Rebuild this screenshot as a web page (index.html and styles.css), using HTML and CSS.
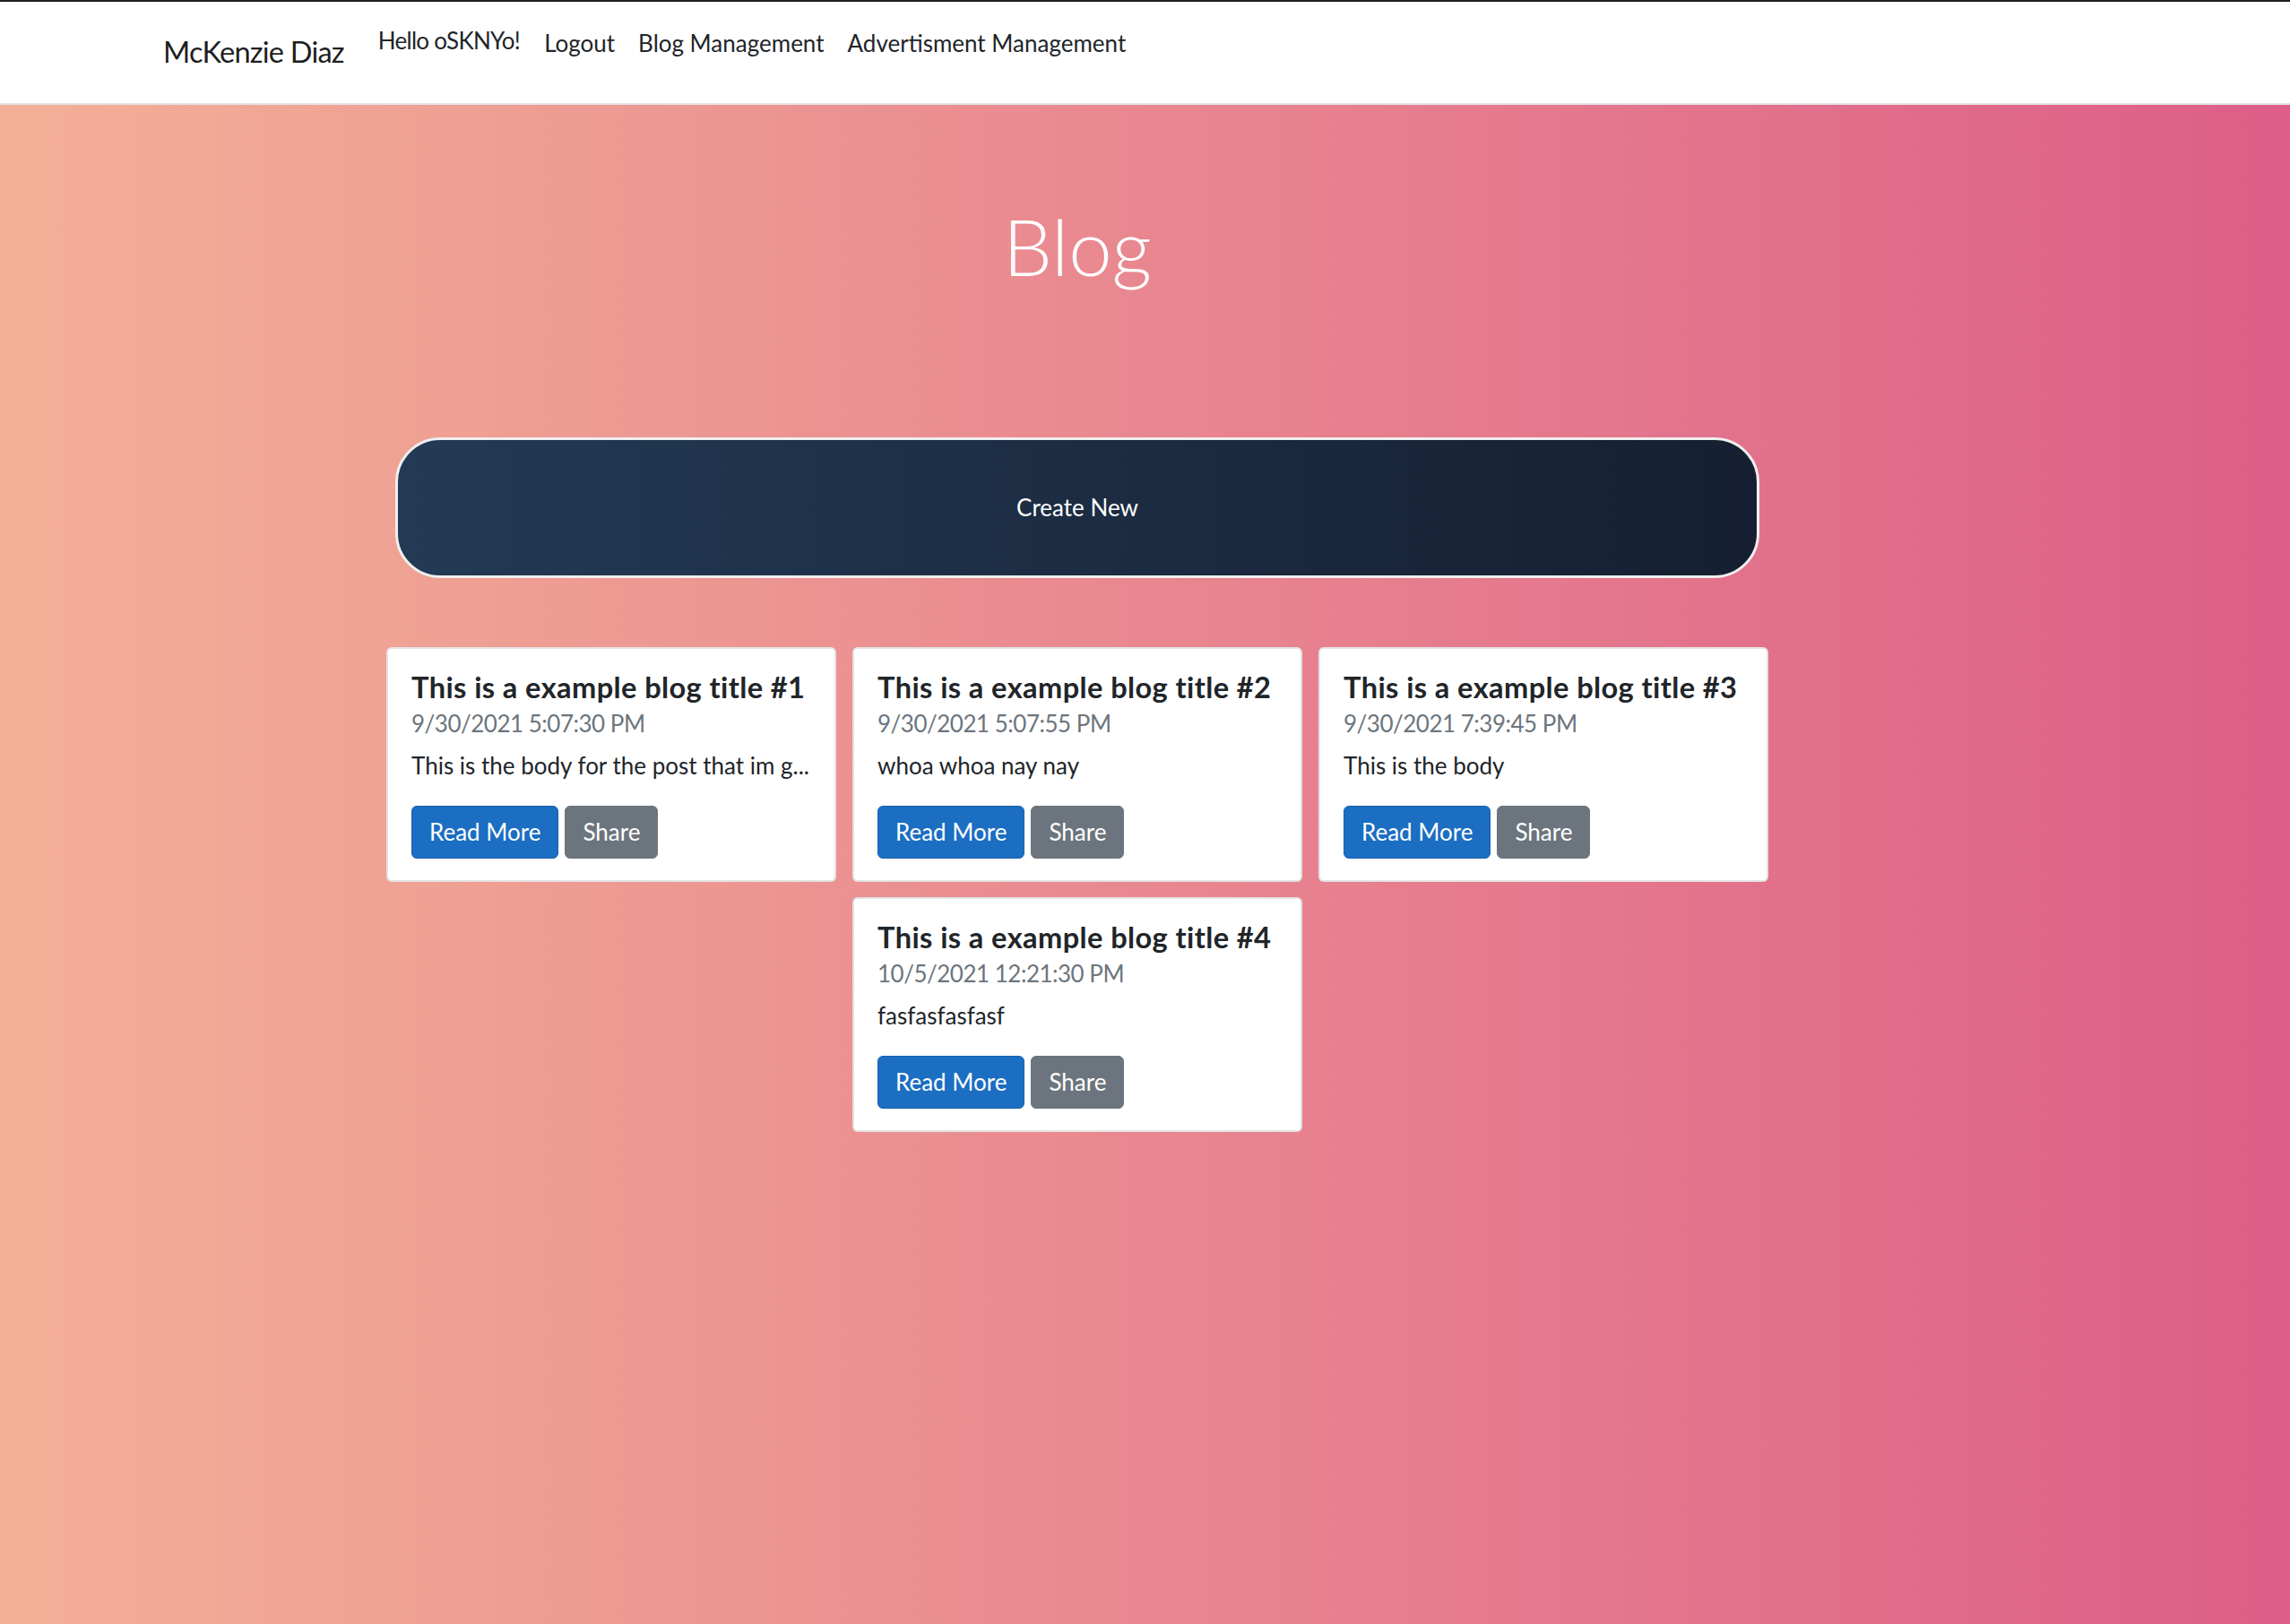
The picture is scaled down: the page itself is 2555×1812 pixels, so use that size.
FILE: index.html
```html
<!DOCTYPE html>
<html lang="en">
<head>
<meta charset="utf-8">
<title>Blog - McKenzie Diaz</title>
<link rel="stylesheet" href="styles.css">
</head>
<body>
<header class="topbar">
  <nav class="navbar">
    <a class="brand" href="#">McKenzie Diaz</a>
    <span class="nav-text">Hello oSKNYo!</span>
    <a class="nav-link" href="#">Logout</a>
    <a class="nav-link" href="#">Blog Management</a>
    <a class="nav-link" href="#">Advertisment Management</a>
  </nav>
</header>
<main class="page">
  <h1 class="page-title">Blog</h1>
  <a class="create-btn" href="#">Create New</a>
  <section class="cards">
    <article class="card">
      <h5 class="card-title">This is a example blog title #1</h5>
      <div class="card-date">9/30/2021 5:07:30 PM</div>
      <p class="card-text">This is the body for the post that im g...</p>
      <div class="card-actions">
        <a class="btn btn-primary" href="#">Read More</a>
        <a class="btn btn-secondary" href="#">Share</a>
      </div>
    </article>
    <article class="card">
      <h5 class="card-title">This is a example blog title #2</h5>
      <div class="card-date">9/30/2021 5:07:55 PM</div>
      <p class="card-text">whoa whoa nay nay</p>
      <div class="card-actions">
        <a class="btn btn-primary" href="#">Read More</a>
        <a class="btn btn-secondary" href="#">Share</a>
      </div>
    </article>
    <article class="card">
      <h5 class="card-title">This is a example blog title #3</h5>
      <div class="card-date">9/30/2021 7:39:45 PM</div>
      <p class="card-text">This is the body</p>
      <div class="card-actions">
        <a class="btn btn-primary" href="#">Read More</a>
        <a class="btn btn-secondary" href="#">Share</a>
      </div>
    </article>
    <article class="card">
      <h5 class="card-title">This is a example blog title #4</h5>
      <div class="card-date">10/5/2021 12:21:30 PM</div>
      <p class="card-text">fasfasfasfasf</p>
      <div class="card-actions">
        <a class="btn btn-primary" href="#">Read More</a>
        <a class="btn btn-secondary" href="#">Share</a>
      </div>
    </article>
  </section>
</main>
</body>
</html>
```
FILE: styles.css
```css
html, body {
  margin: 0;
  padding: 0;
}

body {
  min-height: 100vh;
  font-family: Lato, "Open Sans", sans-serif;
  font-size: 26px;
  line-height: 1.5;
  color: #212529;
  background: linear-gradient(to right, #f4b097, #dd5e88);
}

a {
  text-decoration: none;
}

.topbar {
  background: #ffffff;
  border-top: 2px solid #1e1e1e;
  border-bottom: 2px solid #e2e4e8;
}

.navbar {
  display: flex;
  align-items: flex-start;
  height: 113px;
  padding-left: 182px;
}

.brand {
  margin-top: 32px;
  margin-right: 38px;
  font-size: 32.6px;
  line-height: 1.5;
  letter-spacing: -0.8px;
  color: rgba(0, 0, 0, 0.9);
}

.nav-text {
  margin-top: 24px;
  margin-right: 14px;
  letter-spacing: -0.7px;
  color: #212529;
}

.nav-link {
  margin-top: 27px;
  padding: 0 13px;
  color: #212529;
}

.page {
  display: flex;
  flex-direction: column;
  align-items: center;
  padding-right: 151px;
  padding-bottom: 60px;
}

.page-title {
  margin: 106px 0 0;
  font-size: 87px;
  font-weight: 300;
  line-height: 1.2;
  color: #ffffff;
}

.create-btn {
  box-sizing: border-box;
  display: flex;
  align-items: center;
  justify-content: center;
  width: 1522px;
  height: 157px;
  margin-top: 161px;
  border: 3px solid #efefef;
  border-radius: 50px;
  background: linear-gradient(to right, #233a55, #151f31);
  color: #ffffff;
  font-size: 26px;
}

.cards {
  display: flex;
  flex-wrap: wrap;
  justify-content: center;
  gap: 17px 18px;
  width: 1542px;
  margin-top: 77px;
}

.card {
  box-sizing: border-box;
  width: 502px;
  padding: 23px 26px 24px;
  background: #ffffff;
  border: 2px solid rgba(0, 0, 0, 0.11);
  border-radius: 6px;
}

.card-title {
  margin: 0 0 2px;
  font-size: 32.6px;
  font-weight: 700;
  line-height: 39px;
  letter-spacing: 0.4px;
  white-space: nowrap;
}

.card-date {
  color: #6c757d;
  line-height: 39px;
  letter-spacing: -0.5px;
}

.card-text {
  margin: 8px 0 0;
  line-height: 39px;
  white-space: nowrap;
}

.card-actions {
  display: flex;
  gap: 7px;
  margin-top: 25px;
}

.btn {
  display: inline-block;
  padding: 9px 19px;
  border: 1.5px solid transparent;
  border-radius: 6px;
  font-size: 26px;
  line-height: 39px;
  color: #ffffff;
}

.btn-primary {
  background: #1b6ec2;
  border-color: #1861ac;
}

.btn-secondary {
  background: #6c757d;
  border-color: #6c757d;
}
```
